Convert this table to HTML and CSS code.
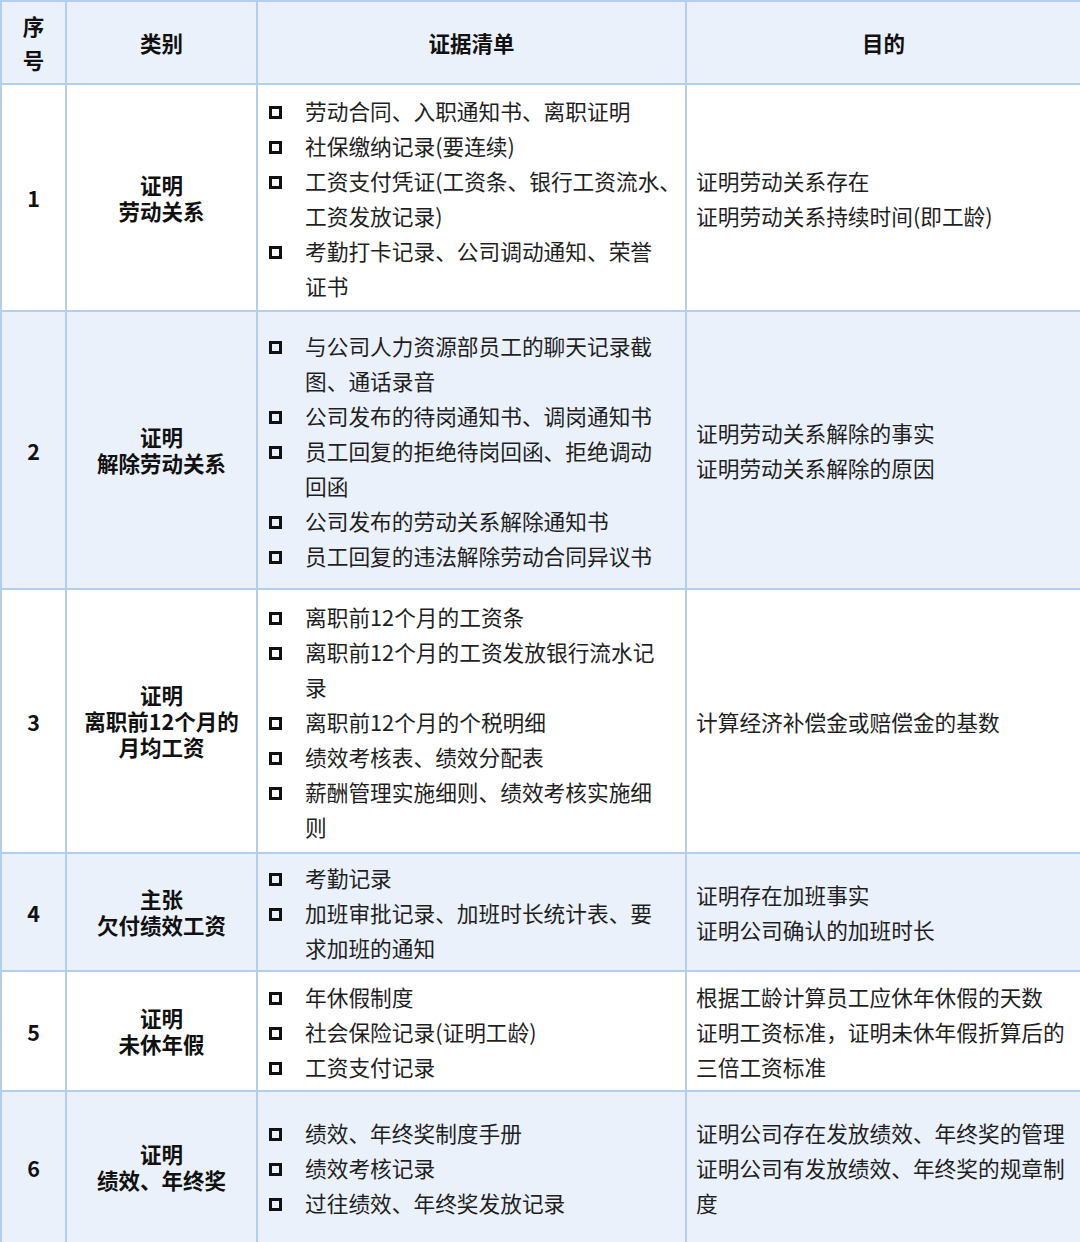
FILE: index.html
```html
<!DOCTYPE html>
<html lang="zh">
<head>
<meta charset="utf-8">
<link rel="stylesheet" href="styles.css">
</head>
<body>
<table class="evidence">
  <colgroup>
    <col class="c-no">
    <col class="c-type">
    <col class="c-list">
    <col class="c-goal">
  </colgroup>
  <thead>
    <tr class="r-head">
      <th class="no">序<br>号</th>
      <th>类别</th>
      <th>证据清单</th>
      <th>目的</th>
    </tr>
  </thead>
  <tbody>
    <tr class="r1">
      <td class="no">1</td>
      <td class="type">证明<br>劳动关系</td>
      <td class="list"><ul>
        <li><span class="box"></span><span>劳动合同、入职通知书、离职证明</span></li>
        <li><span class="box"></span><span>社保缴纳记录(要连续)</span></li>
        <li><span class="box"></span><span><span class="keep">工资支付凭证(工资条、银行工资流水、</span><br>工资发放记录)</span></li>
        <li><span class="box"></span><span>考勤打卡记录、公司调动通知、荣誉证书</span></li>
      </ul></td>
      <td class="goal">证明劳动关系存在<br>证明劳动关系持续时间(即工龄)</td>
    </tr>
    <tr class="r2 alt">
      <td class="no">2</td>
      <td class="type">证明<br>解除劳动关系</td>
      <td class="list"><ul>
        <li><span class="box"></span><span>与公司人力资源部员工的聊天记录截图、通话录音</span></li>
        <li><span class="box"></span><span>公司发布的待岗通知书、调岗通知书</span></li>
        <li><span class="box"></span><span>员工回复的拒绝待岗回函、拒绝调动回函</span></li>
        <li><span class="box"></span><span>公司发布的劳动关系解除通知书</span></li>
        <li><span class="box"></span><span>员工回复的违法解除劳动合同异议书</span></li>
      </ul></td>
      <td class="goal">证明劳动关系解除的事实<br>证明劳动关系解除的原因</td>
    </tr>
    <tr class="r3">
      <td class="no">3</td>
      <td class="type">证明<br>离职前12个月的<br>月均工资</td>
      <td class="list"><ul>
        <li><span class="box"></span><span>离职前12个月的工资条</span></li>
        <li><span class="box"></span><span>离职前12个月的工资发放银行流水记录</span></li>
        <li><span class="box"></span><span>离职前12个月的个税明细</span></li>
        <li><span class="box"></span><span>绩效考核表、绩效分配表</span></li>
        <li><span class="box"></span><span>薪酬管理实施细则、绩效考核实施细则</span></li>
      </ul></td>
      <td class="goal">计算经济补偿金或赔偿金的基数</td>
    </tr>
    <tr class="r4 alt">
      <td class="no">4</td>
      <td class="type">主张<br>欠付绩效工资</td>
      <td class="list"><ul>
        <li><span class="box"></span><span>考勤记录</span></li>
        <li><span class="box"></span><span>加班审批记录、加班时长统计表、要求加班的通知</span></li>
      </ul></td>
      <td class="goal">证明存在加班事实<br>证明公司确认的加班时长</td>
    </tr>
    <tr class="r5">
      <td class="no">5</td>
      <td class="type">证明<br>未休年假</td>
      <td class="list"><ul>
        <li><span class="box"></span><span>年休假制度</span></li>
        <li><span class="box"></span><span>社会保险记录(证明工龄)</span></li>
        <li><span class="box"></span><span>工资支付记录</span></li>
      </ul></td>
      <td class="goal">根据工龄计算员工应休年休假的天数<br>证明工资标准，证明未休年假折算后的三倍工资标准</td>
    </tr>
    <tr class="r6 alt">
      <td class="no">6</td>
      <td class="type">证明<br>绩效、年终奖</td>
      <td class="list"><ul>
        <li><span class="box"></span><span>绩效、年终奖制度手册</span></li>
        <li><span class="box"></span><span>绩效考核记录</span></li>
        <li><span class="box"></span><span>过往绩效、年终奖发放记录</span></li>
      </ul></td>
      <td class="goal">证明公司存在发放绩效、年终奖的管理<br>证明公司有发放绩效、年终奖的规章制度</td>
    </tr>
  </tbody>
</table>
</body>
</html>
```

FILE: styles.css
```css
html, body {
  margin: 0;
  padding: 0;
  background: #ffffff;
}

body {
  font-family: "Noto Sans CJK SC", "Noto Sans", sans-serif;
  color: #1f1f1f;
  width: 1080px;
}

.evidence {
  width: 1080px;
  border-collapse: collapse;
  table-layout: fixed;
}

.c-no { width: 65px; }
.c-type { width: 191px; }
.c-list { width: 429px; }
.c-goal { width: 395px; }

.evidence th,
.evidence td {
  border: 2px solid #b3cfee;
  padding: 0;
  vertical-align: middle;
}

.evidence th {
  background: #ebf1fa;
  font-size: 21.5px;
  font-weight: 700;
  text-align: center;
  line-height: 34px;
  color: #111;
}

.r-head { height: 83px; }
.r1 { height: 227px; }
.r2 { height: 278px; }
.r3 { height: 264px; }
.r4 { height: 118px; }
.r5 { height: 120px; }
.r6 { height: 152px; }

.alt td { background: #ebf1fa; }

.no {
  text-align: center;
  font-size: 21.5px;
  font-weight: 700;
  color: #111;
}

.type {
  text-align: center;
  font-size: 21.5px;
  font-weight: 700;
  line-height: 26px;
  color: #111;
}

.list {
  padding: 0 18px 0 11px !important;
  font-size: 21.7px;
  line-height: 35px;
}

.list ul {
  list-style: none;
  margin: 0;
  padding: 0;
}

.list li {
  display: flex;
  align-items: flex-start;
}

.keep {
  white-space: nowrap;
}

.box {
  flex: 0 0 auto;
  width: 7px;
  height: 7px;
  border: 3px solid #111;
  margin-top: 13px;
  margin-right: 23px;
}

.goal {
  padding: 0 4px 0 9px !important;
  font-size: 21.7px;
  line-height: 35px;
}
```
